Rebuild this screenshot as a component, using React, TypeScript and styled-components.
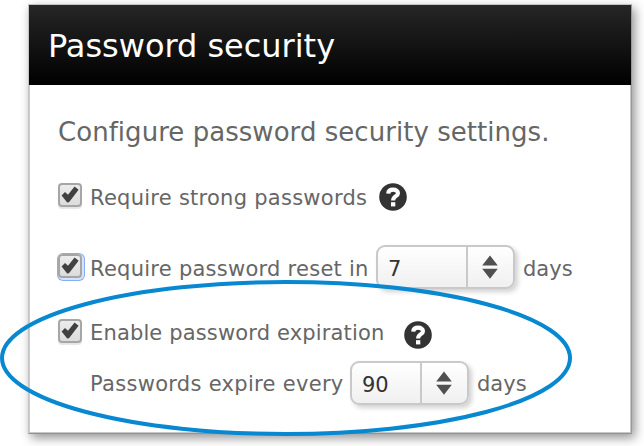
import React from 'react';
import styled, { createGlobalStyle } from 'styled-components';

const GlobalStyle = createGlobalStyle`
  * { box-sizing: border-box; }
  body {
    margin: 0;
    background: #fff;
    overflow: hidden;
    font-family: Verdana, 'DejaVu Sans', sans-serif;
    color: #666;
  }
`;

const Page = styled.main`
  position: relative;
  width: 644px;
  height: 446px;
  padding: 4px 0 0 28px;
`;

const Panel = styled.section`
  width: 604px;
  height: 430px;
  display: flex;
  flex-direction: column;
  background: #fff;
  border: 1px solid #c4c4c4;
  border-right-color: #999;
  border-bottom-color: #929292;
  box-shadow: inset 1px 0 #ccc, inset -1px -1px #c8c8c8, 3px 4px 10px rgba(0, 0, 0, 0.42);
`;

const Header = styled.header`
  height: 80px;
  flex: none;
  padding-left: 19px;
  background: linear-gradient(#262626, #000);
  color: #fff;
`;

const Title = styled.h1`
  margin: 0;
  font-size: 32px;
  font-weight: 400;
  line-height: 82px;
  letter-spacing: -0.02px;
  white-space: nowrap;
`;

const Body = styled.div`
  padding: 23px 0 0 29px;
  display: flex;
  flex-direction: column;
`;

const Intro = styled.p`
  margin: 0;
  height: 48px;
  line-height: 48px;
  font-size: 26px;
  letter-spacing: 0.04px;
  white-space: nowrap;
`;

const Row = styled.div<{ $height: number; $indent?: boolean }>`
  display: flex;
  align-items: center;
  height: ${(p) => p.$height}px;
  padding-left: ${(p) => (p.$indent ? 32 : 0)}px;
`;

const Label = styled.span<{ $width: number; $spacing?: number; $drop?: number }>`
  flex: none;
  width: ${(p) => p.$width}px;
  margin-top: ${(p) => p.$drop ?? 2}px;
  font-size: 21px;
  line-height: 30px;
  letter-spacing: ${(p) => p.$spacing ?? 0}px;
  white-space: nowrap;
`;

const CheckBox = styled.span<{ $focused?: boolean; $lift: number }>`
  flex: none;
  width: 24px;
  height: 24px;
  margin-right: 8px;
  margin-top: ${(p) => -p.$lift}px;
  border: 2px solid #a6a6a6;
  border-radius: 4px;
  background: linear-gradient(#ececec, #dcdcdc);
  box-shadow: ${(p) =>
    p.$focused ? '1px 1px 0 1px #d5e2fa, 1px 1px 0 2px #86aef5' : '0 2px 1px rgba(0, 0, 0, 0.1)'};
  svg { display: block; }
`;

const HelpSvg = styled.svg<{ $drop?: number }>`
  display: block;
  flex: none;
  margin-top: ${(p) => p.$drop ?? 0}px;
`;

const Spinner = styled.div<{ $width: number }>`
  flex: none;
  display: flex;
  width: ${(p) => p.$width}px;
  height: 44px;
  margin-top: -2px;
  margin-right: 8px;
  border: 2px solid #c9c9c9;
  border-radius: 9px;
  background: linear-gradient(#fff, #f0f0f0);
  box-shadow: 3px 3px 5px rgba(0, 0, 0, 0.18);
`;

const Value = styled.span`
  flex: 1;
  padding-left: 10px;
  font-size: 21px;
  line-height: 44px;
  color: #333;
`;

const Arrows = styled.span`
  width: 47px;
  padding-right: 2px;
  border-left: 2px solid #c9c9c9;
  display: flex;
  align-items: center;
  justify-content: center;
`;

const Highlight = styled.svg`
  position: absolute;
  left: 0;
  top: 0;
  pointer-events: none;
`;

function Check({ focused, lift = 4 }: { focused?: boolean; lift?: number }) {
  return (
    <CheckBox $focused={focused} $lift={lift}>
      <svg width="20" height="20" viewBox="0 0 20 20">
        <path d="M1.6 10.4 L5 7 L8 9.8 L14.6 1.4 L18.6 4.8 L9.4 16.8 L7.4 17.8 Z" fill="#414141" />
      </svg>
    </CheckBox>
  );
}

function Help({ drop }: { drop?: number }) {
  return (
    <HelpSvg $drop={drop} width="28" height="28" viewBox="0 0 28 28">
      <circle cx="14" cy="14" r="13.8" fill="#333" />
      <path
        d="M9.2 10.6 C9.4 7.5 11.4 6.6 14.1 6.6 C17 6.6 19 8 19 10.2 C19 13.4 14.1 13 14.1 17.4"
        fill="none"
        stroke="#fff"
        strokeWidth="4.1"
      />
      <rect x="12" y="19.2" width="4.3" height="4.2" fill="#fff" />
    </HelpSvg>
  );
}

function NumberField({ value, width }: { value: number; width: number }) {
  return (
    <Spinner $width={width}>
      <Value>{value}</Value>
      <Arrows>
        <svg width="16" height="24" viewBox="0 0 16 24">
          <path d="M8 0.5 L15.8 10.5 H0.2 Z M0.2 13.7 H15.8 L8 23.7 Z" fill="#505050" />
        </svg>
      </Arrows>
    </Spinner>
  );
}

export default function App() {
  return (
    <>
      <GlobalStyle />
      <Page>
        <Panel>
          <Header>
            <Title>Password security</Title>
          </Header>
          <Body>
            <Intro>Configure password security settings.</Intro>
            <Row $height={82}>
              <Check />
              <Label $width={289} $spacing={0.26}>Require strong passwords</Label>
              <Help />
            </Row>
            <Row $height={60}>
              <Check focused />
              <Label $width={286} $spacing={0.26}>Require password reset in</Label>
              <NumberField value={7} width={139} />
              <Label $width={60}>days</Label>
            </Row>
            <Row $height={68}>
              <Check lift={2} />
              <Label $width={314} $spacing={0.15}>Enable password expiration</Label>
              <Help drop={6} />
            </Row>
            <Row $height={36} $indent>
              <Label $width={260} $spacing={0.3} $drop={0}>Passwords expire every</Label>
              <NumberField value={90} width={119} />
              <Label $width={60} $drop={0}>days</Label>
            </Row>
          </Body>
        </Panel>
        <Highlight width="644" height="446" viewBox="0 0 644 446">
          <ellipse cx="286" cy="358" rx="284" ry="76" fill="none" stroke="#0788d1" strokeWidth="4" />
        </Highlight>
      </Page>
    </>
  );
}
